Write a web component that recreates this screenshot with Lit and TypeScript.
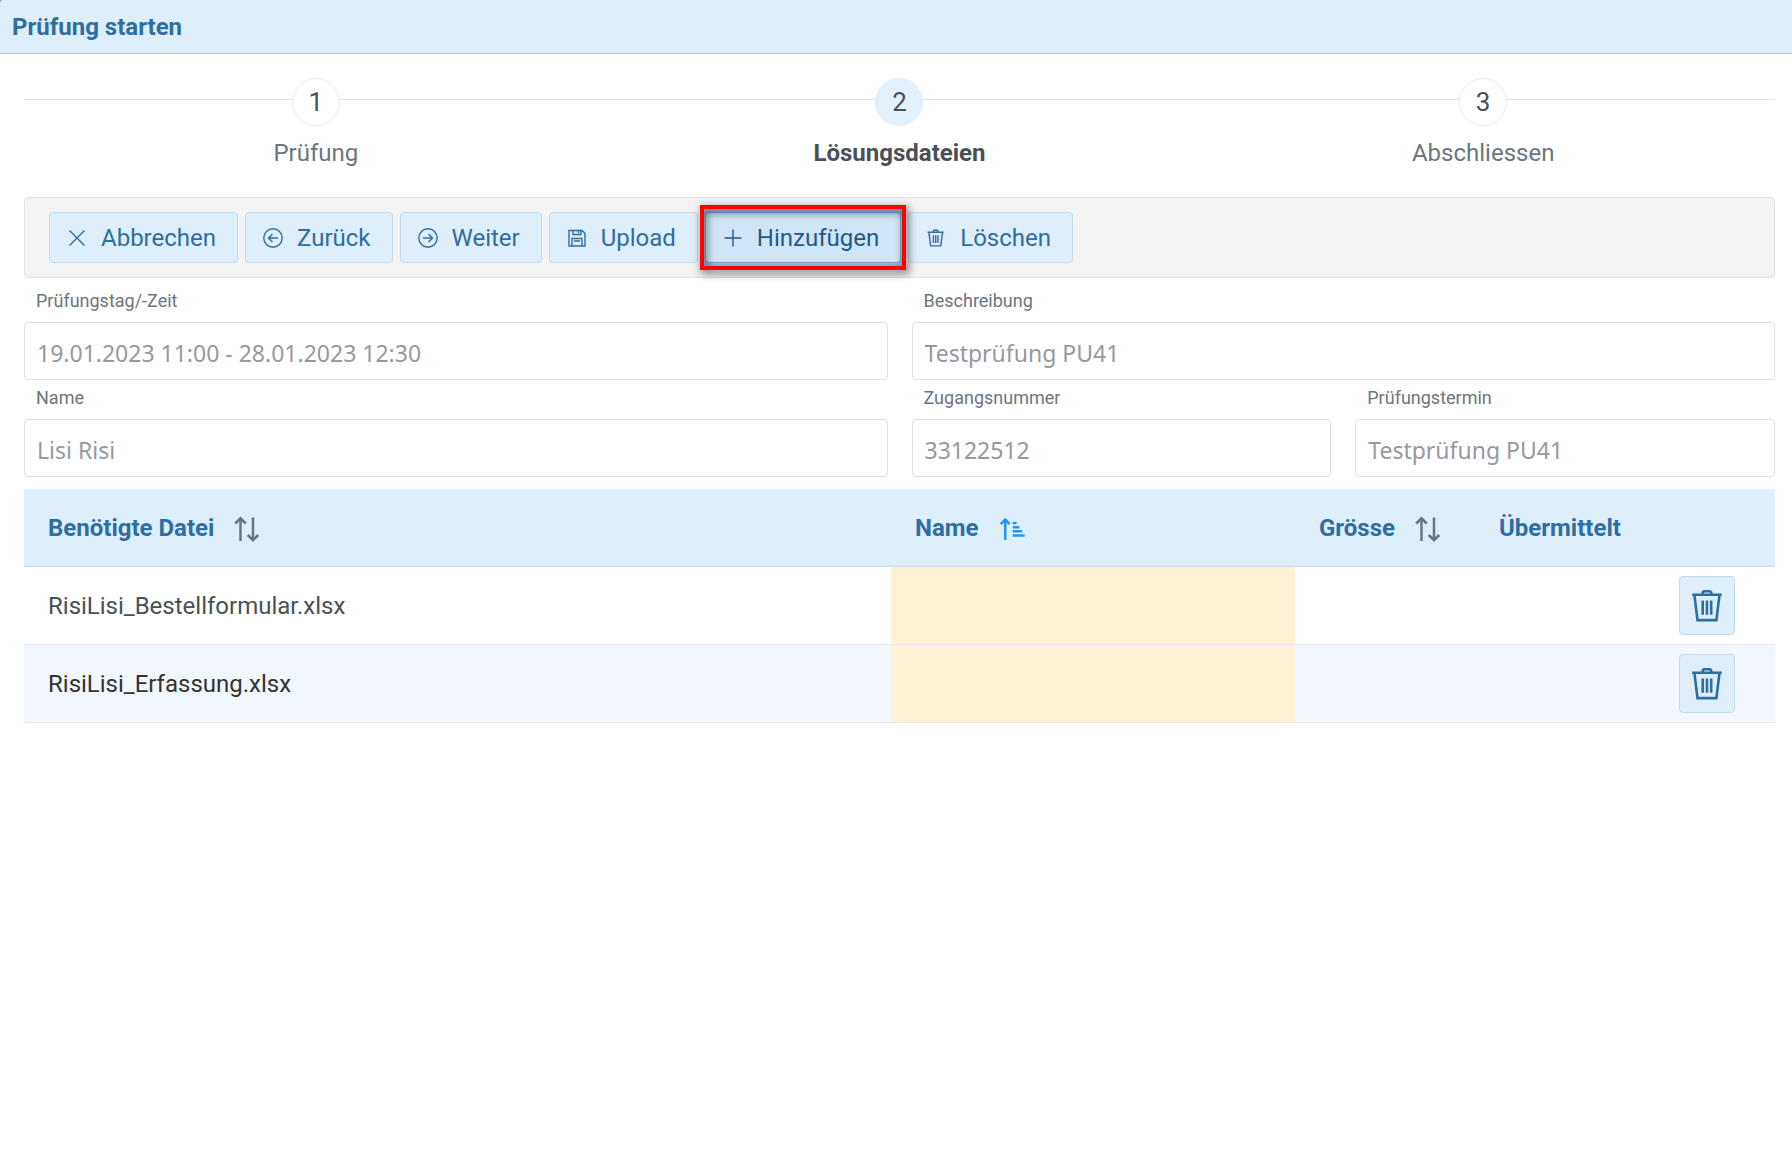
import { LitElement, html, css, svg } from "lit";
import { customElement, property, state } from "lit/decorators.js";
import { classMap } from "lit/directives/class-map.js";

const shapes = {
  times: svg`<path d="M2.5 2.5 17.5 17.5M17.5 2.5 2.5 17.5" />`,
  plus: svg`<path d="M10 1.5V18.5M1.5 10H18.5" />`,
  back: svg`<circle cx="10" cy="10" r="9.2" /><path d="M15 10H5.5M9.5 6 5.5 10 9.5 14" />`,
  forward: svg`<circle cx="10" cy="10" r="9.2" /><path d="M5 10H14.5M10.5 6 14.5 10 10.5 14" />`,
  save: svg`<path d="M2 2.5H15L18 5.5V18H2ZM5 18V10.5H15V18M6 2.5V6.5H14V2.5M11.5 2.5V5M7 13H13" />`,
  trash: svg`<path d="M1.700 4.200H17.700M2.900 4.200 4.600 17.900H14.800L16.500 4.200M7.400 4.200V3L8 2.300H11.400L12 3V4.200M7.400 7.300V15M9.700 7.300V15M12 7.300V15" />`,
  sort: svg`<path d="M5.2 20.8V3M1 6.800 5.200 2.600 9.400 6.800M15.200 2V19.800M11 16 15.200 20.200 19.400 16" />`,
  sortAsc: svg`<path d="M5 20V4M1.400 7.300 5 3.700 8.600 7.300M11 6.400H14M11 9.700H16.300M11 13H18.500M11 16.300H20.500" />`,
};

type IconName = keyof typeof shapes;

@customElement("app-icon")
export class AppIcon extends LitElement {
  @property() name: IconName = "plus";

  static styles = css`
    :host {
      display: block;
      width: 20px;
      height: 20px;
      flex: none;
    }
    .glyph {
      display: block;
      width: 100%;
      height: 100%;
      fill: none;
      stroke: currentColor;
      stroke-width: var(--icon-stroke, 1.4);
      overflow: visible;
    }
  `;

  render() {
    return html`<svg class="glyph" viewBox="0 0 20 20" aria-hidden="true">${shapes[this.name]}</svg>`;
  }
}

interface Action {
  icon: IconName;
  label: string;
  active?: boolean;
}

interface Field {
  id: string;
  label: string;
  value: string;
  wide?: boolean;
}

@customElement("app-root")
export class AppRoot extends LitElement {
  @state() private step = 1;

  private steps = ["Prüfung", "Lösungsdateien", "Abschliessen"];

  private actions: Action[] = [
    { icon: "times", label: "Abbrechen" },
    { icon: "back", label: "Zurück" },
    { icon: "forward", label: "Weiter" },
    { icon: "save", label: "Upload" },
    { icon: "plus", label: "Hinzufügen", active: true },
    { icon: "trash", label: "Löschen" },
  ];

  private fields: Field[] = [
    { id: "zeit", label: "Prüfungstag/-Zeit", value: "19.01.2023 11:00 - 28.01.2023 12:30", wide: true },
    { id: "beschreibung", label: "Beschreibung", value: "Testprüfung PU41", wide: true },
    { id: "name", label: "Name", value: "Lisi Risi", wide: true },
    { id: "zugang", label: "Zugangsnummer", value: "33122512" },
    { id: "termin", label: "Prüfungstermin", value: "Testprüfung PU41" },
  ];

  private files = ["RisiLisi_Bestellformular.xlsx", "RisiLisi_Erfassung.xlsx"];

  static styles = css`
    :host {
      display: block;
      min-height: 100vh;
      background: #ffffff;
      color: #495057;
      font: 400 24px/28px Roboto, "Liberation Sans", sans-serif;
    }
    *,
    *::after {
      box-sizing: border-box;
    }
    button {
      margin: 0;
      font: inherit;
      cursor: pointer;
    }
    .corner {
      background: #a8a8a8;
    }
    .titlebar {
      padding: 13px 12px 12px;
      background: #dfeefb;
      border-bottom: 1px solid #bfc5c9;
      border-top-left-radius: 4px;
    }
    .title {
      margin: 0;
      font-size: 24px;
      line-height: 28px;
      font-weight: 700;
      color: #2d6ea3;
    }
    .content {
      padding: 24px 17px 24px 24px;
    }
    .steps {
      display: grid;
      grid-template-columns: repeat(3, 1fr);
      margin: 0 0 30px;
      padding: 0;
      list-style: none;
      background: linear-gradient(#dee2e6, #dee2e6) 0 21px / 100% 1px no-repeat;
    }
    .step {
      display: flex;
      justify-content: center;
    }
    .step-link {
      display: flex;
      flex-direction: column;
      align-items: center;
      gap: 13px;
      color: #6c757d;
      text-decoration: none;
    }
    .number {
      display: grid;
      place-items: center;
      width: 48px;
      height: 48px;
      border: 1px solid #e9ecef;
      border-radius: 50%;
      background: #ffffff;
      color: #495057;
      font-size: 26px;
    }
    .current .step-link {
      color: #495057;
      font-weight: 700;
    }
    .current .number {
      background: #e3f1fd;
      font-weight: 400;
    }
    .toolbar {
      display: flex;
      flex-wrap: wrap;
      gap: 7px;
      padding: 14px 24px;
      border: 1px solid #dee2e6;
      border-radius: 4px;
      background: #f3f3f3;
    }
    .action {
      display: flex;
      align-items: center;
      gap: 14px;
      height: 51px;
      padding: 0 21px 0 17px;
      border: 1px solid #c1daec;
      border-radius: 4px;
      background: #dfeefb;
      color: #2d6ea3;
    }
    .active {
      position: relative;
      z-index: 1;
      border-color: #74aede;
      background: #d0e5f5;
      color: #1f5a8c;
      box-shadow: 0 0 0 4px #93c8f1;
      outline: none;
    }
    .active::after {
      content: "";
      position: absolute;
      inset: -8px -6px;
      border: 4px solid #ff0000;
      filter: drop-shadow(2px 3px 4px rgba(0, 0, 0, 0.75));
      pointer-events: none;
    }
    .fields {
      display: grid;
      grid-template-columns: repeat(4, minmax(0, 1fr));
      column-gap: 24px;
      margin: 5px 0 12px;
    }
    .field {
      display: flex;
      flex-direction: column;
    }
    .wide {
      grid-column: span 2;
    }
    .label {
      padding: 8px 12px 11px;
      font-size: 18px;
      line-height: 20px;
      color: #6c757d;
    }
    .input {
      width: 100%;
      height: 58px;
      padding: 3px 12px 0;
      border: 1px solid #dfe1e5;
      border-radius: 4px;
      background: #ffffff;
      color: #96999e;
      font: 400 23px/28px "Noto Sans", "Open Sans", sans-serif;
      outline: none;
    }
    .files {
      width: 100%;
      table-layout: fixed;
      border-collapse: separate;
      border-spacing: 0;
    }
    .col-name {
      width: 404px;
    }
    .col-side {
      width: 180px;
    }
    .col-actions {
      width: 120px;
    }
    .head {
      height: 78px;
      padding: 0 24px;
      border-bottom: 1px solid #c1daec;
      background: #dfeefb;
      color: #2d6ea3;
      font-weight: 700;
      text-align: left;
      white-space: nowrap;
    }
    .sorter {
      display: flex;
      align-items: center;
      gap: 20px;
      padding: 0;
      border: 0;
      background: none;
      color: inherit;
    }
    .sort-icon {
      --icon-stroke: 2;
      width: 25px;
      height: 25px;
      color: #6c757d;
    }
    .sorted {
      color: #2196f3;
    }
    .cell {
      height: 78px;
      padding: 0 24px;
      border-bottom: 1px solid #e4e9ee;
    }
    .row:nth-child(even) .cell {
      background: #f2f7fe;
      color: #333333;
    }
    .row .missing,
    .row:nth-child(even) .missing {
      background: #fff2d3;
    }
    .delete {
      display: grid;
      place-items: center;
      width: 56px;
      height: 59px;
      padding: 0;
      border: 1px solid #c1daec;
      border-radius: 4px;
      background: #dfeefb;
      color: #2d6ea3;
    }
    .delete-icon {
      width: 37px;
      height: 37px;
    }
  `;

  private goTo(event: Event, index: number) {
    event.preventDefault();
    this.step = index;
  }

  private renderStep(label: string, index: number) {
    const current = index === this.step;
    return html`<li class=${classMap({ step: true, current })}>
      <a class="step-link" href="#" @click=${(e: Event) => this.goTo(e, index)}>
        <span class="number">${index + 1}</span>
        <span>${label}</span>
      </a>
    </li>`;
  }

  private renderSorter(label: string, icon: IconName) {
    return html`<button class="sorter" type="button">
      ${label}<app-icon class=${classMap({ "sort-icon": true, sorted: icon === "sortAsc" })} name=${icon}></app-icon>
    </button>`;
  }

  render() {
    return html`
      <div class="corner">
        <header class="titlebar"><h1 class="title">Prüfung starten</h1></header>
      </div>
      <main class="content">
        <ol class="steps">
          ${this.steps.map((label, i) => this.renderStep(label, i))}
        </ol>
        <div class="toolbar" role="toolbar">
          ${this.actions.map(
            (a) => html`<button type="button" class=${classMap({ action: true, active: !!a.active })}>
              <app-icon name=${a.icon}></app-icon><span>${a.label}</span>
            </button>`
          )}
        </div>
        <form class="fields">
          ${this.fields.map(
            (f) => html`<div class=${classMap({ field: true, wide: !!f.wide })}>
              <label class="label" for=${f.id}>${f.label}</label>
              <input class="input" id=${f.id} type="text" readonly .value=${f.value} />
            </div>`
          )}
        </form>
        <table class="files">
          <colgroup>
            <col />
            <col class="col-name" />
            <col class="col-side" />
            <col class="col-side" />
            <col class="col-actions" />
          </colgroup>
          <thead>
            <tr>
              <th class="head">${this.renderSorter("Benötigte Datei", "sort")}</th>
              <th class="head">${this.renderSorter("Name", "sortAsc")}</th>
              <th class="head">${this.renderSorter("Grösse", "sort")}</th>
              <th class="head">Übermittelt</th>
              <th class="head"></th>
            </tr>
          </thead>
          <tbody>
            ${this.files.map(
              (file) => html`<tr class="row">
                <td class="cell">${file}</td>
                <td class="cell missing"></td>
                <td class="cell"></td>
                <td class="cell"></td>
                <td class="cell">
                  <button class="delete" type="button" aria-label="Löschen">
                    <app-icon class="delete-icon" name="trash"></app-icon>
                  </button>
                </td>
              </tr>`
            )}
          </tbody>
        </table>
      </main>
    `;
  }
}
